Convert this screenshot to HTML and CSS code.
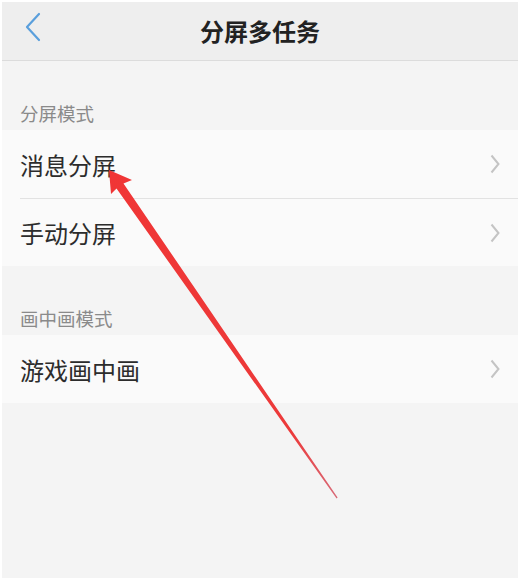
FILE: index.html
```html
<!DOCTYPE html>
<html lang="zh-CN">
<head>
  <meta charset="UTF-8">
  <title>分屏多任务</title>
  <link rel="stylesheet" href="styles.css">
</head>
<body>
  <div class="screen">
    <div class="nav-bar">
      <span class="back">
        <svg width="18" height="30" viewBox="0 0 18 30"><path d="M15 2 L3 15 L15 28" fill="none" stroke="#5a9fdc" stroke-width="2.2" stroke-linecap="round" stroke-linejoin="round"/></svg>
      </span>
      <h1>分屏多任务</h1>
    </div>

    <div class="group-title">分屏模式</div>
    <div class="group">
      <div class="row">
        <span class="row-label">消息分屏</span>
        <svg class="chevron" width="10" height="20" viewBox="0 0 10 20"><path d="M1.5 1.5 L8.5 10 L1.5 18.5" fill="none" stroke="#c4c4c4" stroke-width="2"/></svg>
      </div>
      <div class="row">
        <span class="row-label">手动分屏</span>
        <svg class="chevron" width="10" height="20" viewBox="0 0 10 20"><path d="M1.5 1.5 L8.5 10 L1.5 18.5" fill="none" stroke="#c4c4c4" stroke-width="2"/></svg>
      </div>
    </div>

    <div class="group-title">画中画模式</div>
    <div class="group">
      <div class="row">
        <span class="row-label">游戏画中画</span>
        <svg class="chevron" width="10" height="20" viewBox="0 0 10 20"><path d="M1.5 1.5 L8.5 10 L1.5 18.5" fill="none" stroke="#c4c4c4" stroke-width="2"/></svg>
      </div>
    </div>

    <!-- red pointer drawn over the list -->
    <svg class="pointer" width="520" height="580" viewBox="0 0 520 580">
      <defs>
        <linearGradient id="shaft" x1="109" y1="170" x2="337" y2="498" gradientUnits="userSpaceOnUse">
          <stop offset="0" stop-color="#f03535"/>
          <stop offset="0.8" stop-color="#ec3a3a"/>
          <stop offset="1" stop-color="#d86a78"/>
        </linearGradient>
      </defs>
      <polygon points="109,170 132,180 123.5,183.5 337.6,497.6 336.6,498.4 116.5,188.5 111,194" fill="url(#shaft)"/>
    </svg>
  </div>
</body>
</html>
```

FILE: styles.css
```css
body {
  margin: 0;
  background: #fff;
  font-family: "Noto Sans CJK SC", "Noto Sans", sans-serif;
}
.screen {
  position: relative;
  width: 516px;
  height: 576px;
  margin: 2px;
  background: #f4f4f4;
  overflow: hidden;
}
.nav-bar {
  position: relative;
  height: 58px;
  background: #eeeeee;
  border-bottom: 1px solid #dcdcdc;
  display: flex;
  align-items: center;
  justify-content: center;
}
.nav-bar h1 {
  margin: 0;
  font-size: 24px;
  font-weight: 700;
  color: #222;
  line-height: 1;
}
.back {
  position: absolute;
  left: 22px;
  top: 10px;
  display: flex;
}
.group-title {
  height: 69px;
  box-sizing: border-box;
  padding: 0 18px 5px;
  display: flex;
  align-items: flex-end;
  font-size: 18.5px;
  line-height: 24px;
  color: #8a8a8a;
}
.group {
  background: #fafafa;
}
.row {
  height: 68px;
  display: flex;
  align-items: center;
  justify-content: space-between;
  padding: 0 18px;
}
.row + .row {
  border-top: 1px solid #e2e2e2;
  margin-left: 18px;
  padding-left: 0;
  height: 67px;
}
.row-label {
  font-size: 24px;
  color: #2c2c2c;
}
.pointer {
  position: absolute;
  left: -2px;
  top: -2px;
}
```
